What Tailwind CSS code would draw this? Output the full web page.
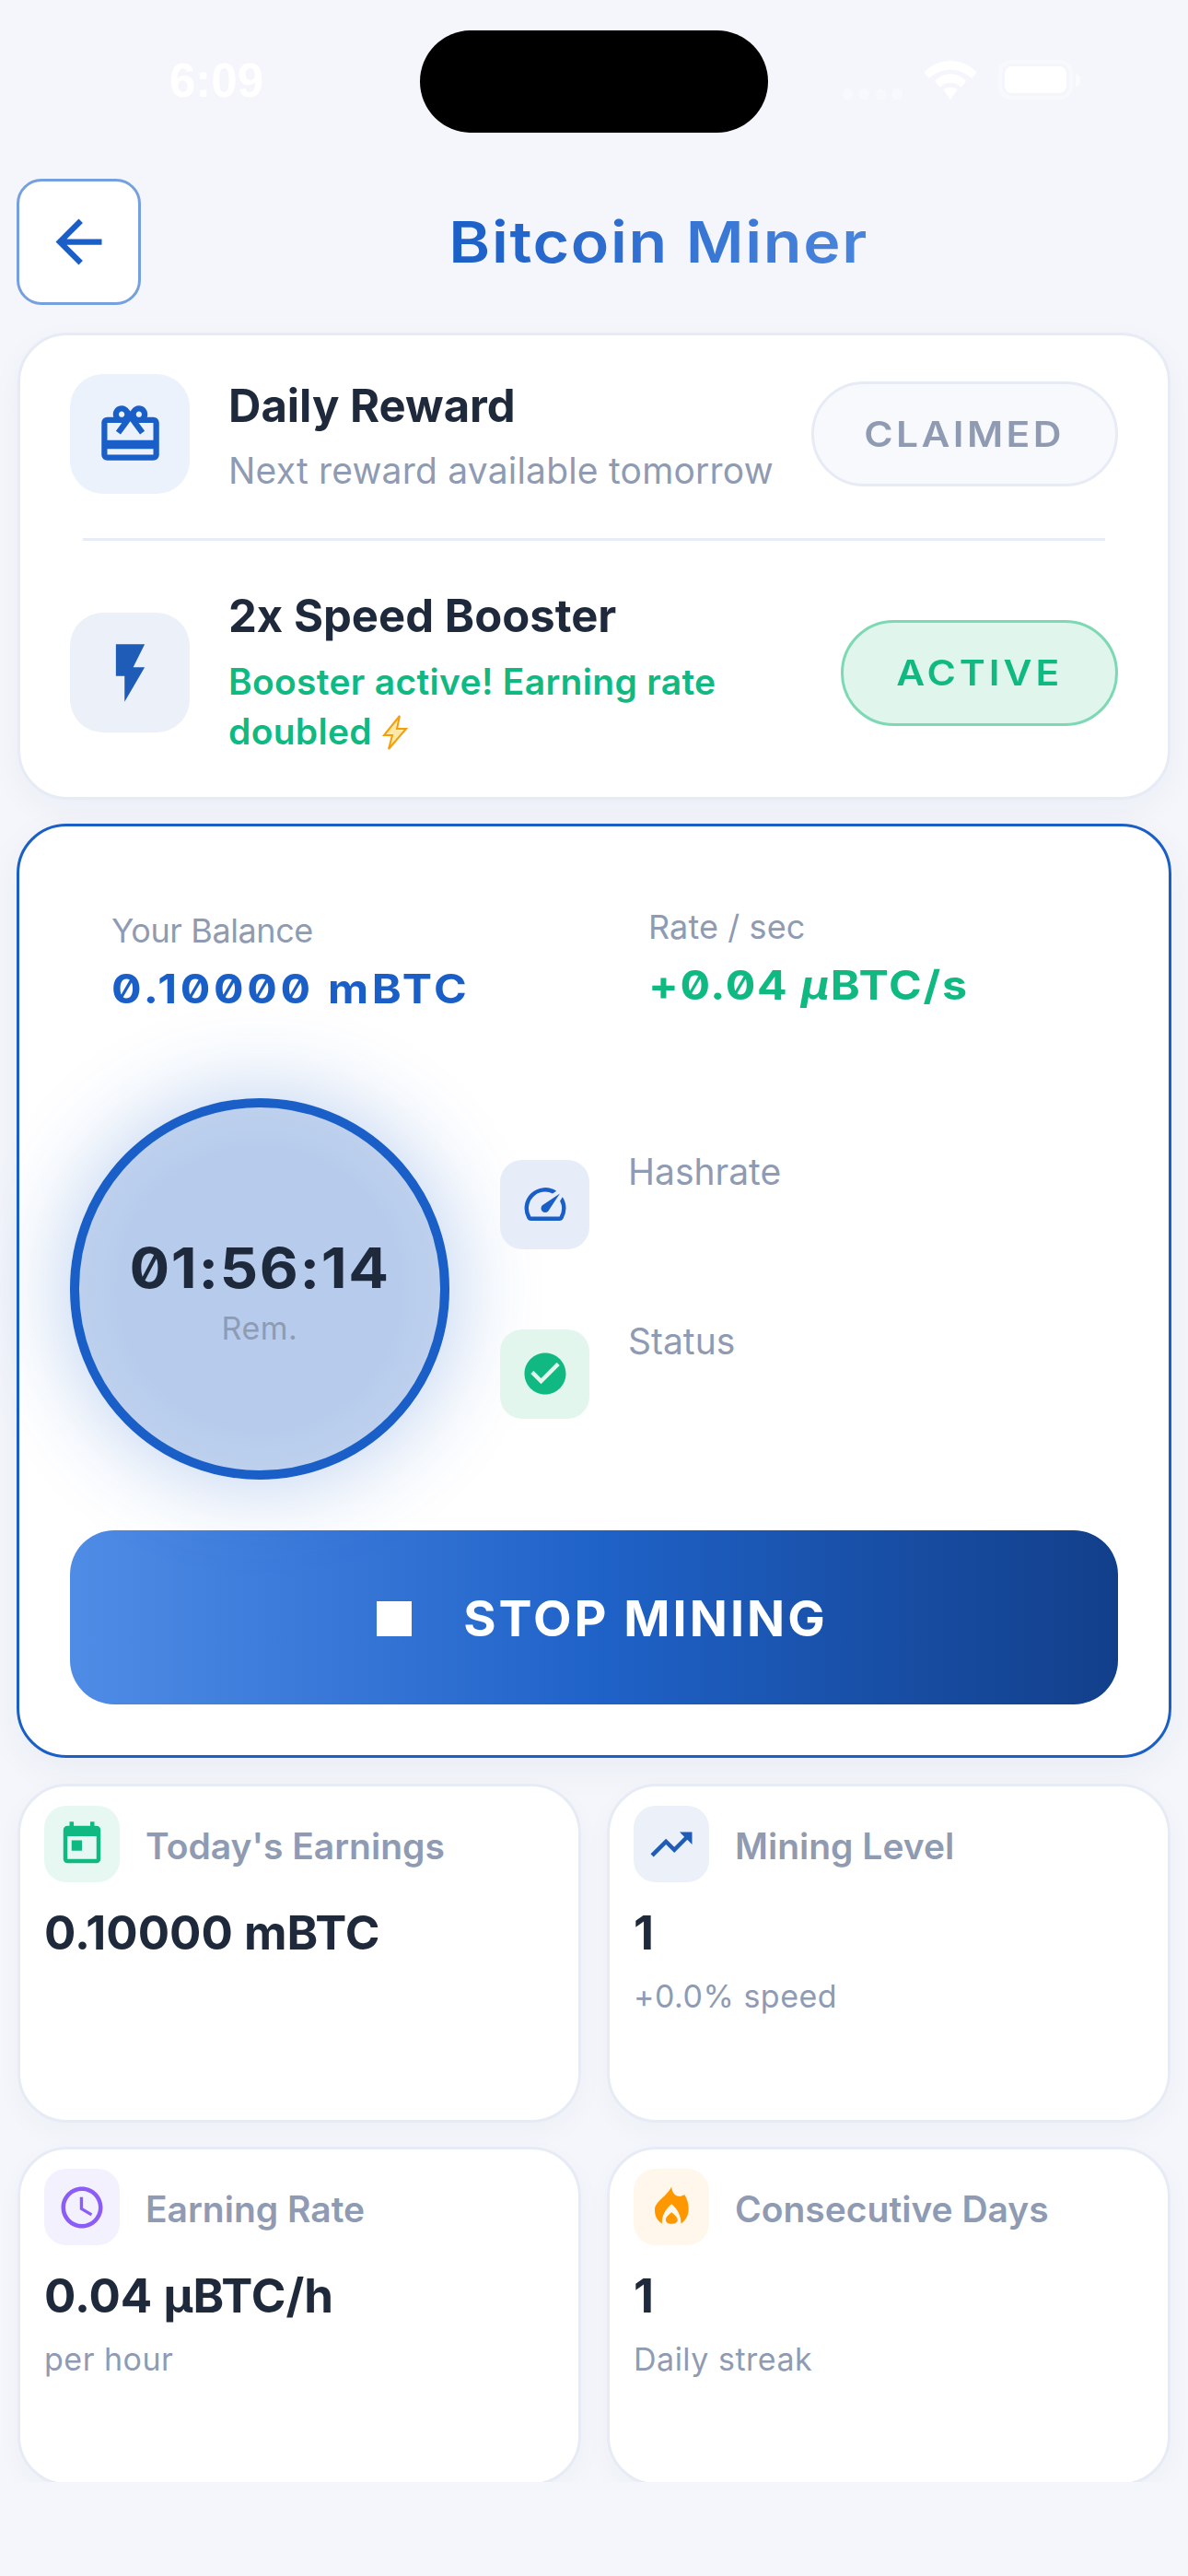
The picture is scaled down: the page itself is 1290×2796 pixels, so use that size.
<!DOCTYPE html>
<html lang="en">
<head>
    <meta charset="UTF-8">
    <meta name="viewport" content="width=device-width, initial-scale=1.0">
    <title>Bitcoin Miner</title>
    <script src="https://cdn.jsdelivr.net/npm/@tailwindcss/browser@4"></script>
</head>
<body class="w-[1290px] h-[2796px] overflow-hidden bg-[#f4f6fb] relative font-[family-name:Inter,sans-serif]">
    <!-- status bar -->
    <div class="h-[194px] relative">
        <div class="absolute left-[456px] top-[33px] w-[378px] h-[111px] rounded-full bg-black"></div>
        <div class="pl-[184px] pt-[57px] text-[51px] leading-[62px] font-semibold text-white font-[family-name:'Liberation_Sans',sans-serif]">6:09</div>
        <div class="absolute left-[915px] top-[65px] flex items-end gap-[23px] text-white">
            <div class="flex gap-[7px] opacity-35">
                <span class="w-[11px] h-[12px] rounded-full bg-white"></span>
                <span class="w-[11px] h-[12px] rounded-full bg-white"></span>
                <span class="w-[11px] h-[12px] rounded-full bg-white"></span>
                <span class="w-[11px] h-[12px] rounded-full bg-white"></span>
            </div>
            <svg class="w-[58px] h-[42px]" viewBox="0 0 60 44" fill="currentColor"><path d="M30 0C19 0 9 4 0 13l6 7c6-6 15-10 24-10s18 4 24 10l6-7C51 4 41 0 30 0z"/><path d="M30 15c-7 0-13 3-18 8l6 7c3-3 7-5 12-5s9 2 12 5l6-7c-5-5-11-8-18-8z"/><path d="M30 30c-4 0-6 1-8 3l8 11 8-11c-2-2-4-3-8-3z"/></svg>
            <div class="flex items-center gap-[3px]">
                <div class="w-[81px] h-[43px] rounded-[14px] border-[4px] border-white/35 p-[3px]"><div class="w-full h-full rounded-[8px] bg-white"></div></div>
                <div class="w-[5px] h-[14px] rounded-r-full bg-white/50"></div>
            </div>
        </div>
    </div>

    <!-- header -->
    <div class="flex items-center pl-[18px] pr-[13px] h-[137px]">
        <button class="w-[135px] h-[137px] shrink-0 rounded-[27px] bg-white border-[3px] border-[#75a0e0] flex items-center justify-center">
            <svg class="w-[75px] h-[75px] text-[#1a5fc8]" viewBox="0 0 24 24" fill="currentColor"><path d="M20 11H7.83l5.59-5.59L12 4l-8 8 8 8 1.41-1.41L7.83 13H20v-2z"/></svg>
        </button>
        <div class="flex-1 text-center">
            <h1 class="inline-block scale-x-[1.1] text-[62px] leading-[72px] font-semibold tracking-[1.5px] bg-linear-to-r from-[#1a5fc8] to-[#4a85dc] bg-clip-text text-transparent">Bitcoin Miner</h1>
        </div>
    </div>

    <!-- scroll area, clipped where the tab bar would start -->
    <div class="h-[2363px] overflow-hidden pt-[30px] px-[18px]">
        <!-- rewards card -->
        <div class="mx-[1px] bg-white border-[3px] border-[#e6ebf5] rounded-[54px] shadow-[0_12px_36px_rgba(30,50,100,0.04)] px-[54px] pt-[42px] pb-[44px]">
            <div class="flex items-center h-[130px]">
                <div class="w-[130px] h-[130px] shrink-0 rounded-[36px] bg-[#ebf2fb] flex items-center justify-center">
                    <svg class="w-[75px] h-[75px] text-[#1a5fc8]" viewBox="0 0 24 24" fill="currentColor"><path d="M20 6h-2.18c.11-.31.18-.65.18-1 0-1.66-1.34-3-3-3-1.05 0-1.96.54-2.5 1.35l-.5.67-.5-.68C10.96 2.54 10.05 2 9 2 7.34 2 6 3.34 6 5c0 .35.07.69.18 1H4c-1.11 0-1.99.89-1.99 2L2 19c0 1.11.89 2 2 2h16c1.11 0 2-.89 2-2V8c0-1.11-.89-2-2-2zm-5-2c.55 0 1 .45 1 1s-.45 1-1 1-1-.45-1-1 .45-1 1-1zM9 4c.55 0 1 .45 1 1s-.45 1-1 1-1-.45-1-1 .45-1 1-1zm11 15H4v-2h16v2zm0-5H4V8h5.08L7 10.83 8.62 12 11 8.76l1-1.36 1 1.36L15.38 12 17 10.83 14.92 8H20v6z"/></svg>
                </div>
                <div class="flex-1 ml-[42px] pt-[6px]">
                    <div class="text-[49px] leading-[60px] font-bold text-[#1e293b]">Daily Reward</div>
                    <div class="mt-[13px] text-[39px] leading-[54px] tracking-[0.2px] text-[#8f9bb3]">Next reward available tomorrow</div>
                </div>
                <div class="w-[333px] h-[114px] shrink-0 rounded-full bg-[#f8f9fc] border-[3px] border-[#e6ebf5] flex items-center justify-center text-[#8f9bb3]">
                    <span class="inline-block scale-x-[1.12] text-[38px] font-semibold tracking-[3px]">CLAIMED</span>
                </div>
            </div>
            <div class="mx-[14px] mt-[48px] mb-[52px] h-[3px] bg-[#e8ecf6]"></div>
            <div class="flex items-center">
                <div class="w-[130px] h-[130px] shrink-0 rounded-[36px] bg-[#ebf0f9] flex items-center justify-center">
                    <svg class="w-[75px] h-[75px] text-[#1e5cb8]" viewBox="0 0 24 24" fill="currentColor"><path d="M7 2v11h3v9l7-12h-4l4-8z"/></svg>
                </div>
                <div class="flex-1 ml-[42px] pr-[130px]">
                    <div class="text-[49px] leading-[60px] font-bold text-[#1e293b]">2x Speed Booster</div>
                    <div class="mt-[14px] text-[39px] leading-[54px] font-semibold tracking-[0.3px] text-[#10b981]">Booster active! Earning rate doubled <svg class="inline-block w-[30px] h-[38px] align-[-6px]" viewBox="0 0 30 38"><path d="M20 1 3 22h9L8 37l19-22h-10z" fill="#ffe9a8" stroke="#f59e0b" stroke-width="2"/></svg></div>
                </div>
                <div class="w-[301px] h-[115px] shrink-0 rounded-full bg-[#e0f5ec] border-[3px] border-[#7dd9b4] flex items-center justify-center text-[#10b981]">
                    <span class="inline-block scale-x-[1.12] text-[38px] font-semibold tracking-[3.5px]">ACTIVE</span>
                </div>
            </div>
        </div>

        <!-- mining card -->
        <div class="mt-[26px] bg-white border-[3px] border-[#1a5fc8] rounded-[54px] shadow-[0_12px_40px_rgba(30,50,100,0.05)] px-[55px] pb-[55px]">
            <div class="flex pl-[45px]">
                <div class="w-[583px] pt-[89px]">
                    <div class="text-[36px] leading-[48px] tracking-[-0.4px] text-[#8f9bb3]">Your Balance</div>
                    <div class="mt-[9px] origin-left scale-x-[1.1] text-[44px] leading-[60px] font-bold tracking-[3.3px] slashed-zero text-[#1a5fc8]">0.10000 mBTC</div>
                </div>
                <div class="pt-[85px]">
                    <div class="text-[36px] leading-[48px] tracking-[0.1px] text-[#8f9bb3]">Rate / sec</div>
                    <div class="mt-[9px] origin-left scale-x-[1.1] text-[44px] leading-[60px] font-bold tracking-[1.5px] slashed-zero text-[#10b981]">+0.04 <i>μ</i>BTC/s</div>
                </div>
            </div>
            <div class="mt-[89px] flex items-center">
                <div class="w-[412px] h-[414px] shrink-0 rounded-full border-[10px] border-[#1a5fc8] bg-[radial-gradient(circle,#b7ccec_55%,#c8d9f1_100%)] shadow-[0_0_100px_rgba(26,95,200,0.32)] flex flex-col items-center justify-center pt-[8px]">
                    <div class="scale-x-[1.08] text-[60px] leading-[70px] font-bold tracking-[1.5px] slashed-zero text-[#1e293b]">01:56:14</div>
                    <div class="mt-[7px] text-[34px] leading-[48px] tracking-[0.5px] text-[#8f9bb3]">Rem.</div>
                </div>
                <div class="ml-[55px] flex flex-col gap-[87px]">
                    <div class="flex items-start">
                        <div class="w-[97px] h-[97px] rounded-[24px] bg-[#e6edf8] flex items-center justify-center">
                            <svg class="w-[54px] h-[54px] text-[#1a5fc8]" viewBox="0 0 24 24" fill="currentColor"><path d="M20.38 8.57l-1.23 1.85a8 8 0 0 1-.22 7.58H5.07A8 8 0 0 1 15.58 6.85l1.85-1.23A10 10 0 0 0 3.35 19a2 2 0 0 0 1.72 1h13.85a2 2 0 0 0 1.74-1 10 10 0 0 0-.27-10.44zm-9.79 6.84a2 2 0 0 0 2.83 0l5.66-8.49-8.49 5.66a2 2 0 0 0 0 2.83z"/></svg>
                        </div>
                        <div class="ml-[42px] -mt-[11px] text-[39px] leading-[48px] text-[#8f9bb3]">Hashrate</div>
                    </div>
                    <div class="flex items-start">
                        <div class="w-[97px] h-[97px] rounded-[24px] bg-[#e3f6ee] flex items-center justify-center">
                            <svg class="w-[54px] h-[54px] text-[#10b981]" viewBox="0 0 24 24" fill="currentColor"><path d="M12 2C6.48 2 2 6.48 2 12s4.48 10 10 10 10-4.48 10-10S17.52 2 12 2zm-2 15l-5-5 1.41-1.41L10 14.17l7.59-7.59L19 8l-9 9z"/></svg>
                        </div>
                        <div class="ml-[42px] -mt-[11px] text-[39px] leading-[48px] text-[#8f9bb3]">Status</div>
                    </div>
                </div>
            </div>
            <button class="mt-[55px] w-full h-[189px] rounded-[48px] bg-linear-to-r from-[#4f8ce6] via-[#1f62c8] to-[#123f8a] flex items-center justify-center gap-[56px] pl-[18px] pt-[2px] text-white">
                <span class="w-[38px] h-[38px] bg-white"></span>
                <span class="text-[54px] font-bold tracking-[3px]">STOP MINING</span>
            </button>
        </div>

        <!-- stats -->
        <div class="mt-[28px] mx-[1px] grid grid-cols-2 gap-x-[28px] gap-y-[26px]">
            <div class="h-[368px] bg-white border-[3px] border-[#e6ebf5] rounded-[54px] shadow-[0_10px_30px_rgba(30,50,100,0.03)] px-[26px] pt-[21px]">
                <div class="flex items-center gap-[28px]">
                    <div class="w-[82px] h-[83px] rounded-[24px] bg-[#e7f8f2] flex items-center justify-center">
                        <svg class="w-[54px] h-[54px] text-[#10b981]" viewBox="0 0 24 24" fill="currentColor"><path d="M19 3h-1V1h-2v2H8V1H6v2H5c-1.11 0-1.99.9-1.99 2L3 19c0 1.1.89 2 2 2h14c1.1 0 2-.9 2-2V5c0-1.1-.9-2-2-2zm0 16H5V8h14v11zM7 10h5v5H7z"/></svg>
                    </div>
                    <div class="pt-[5px] text-[39px] font-semibold text-[#8f9bb3]">Today's Earnings</div>
                </div>
                <div class="mt-[25px] text-[51px] leading-[60px] font-bold text-[#1e293b]">0.10000 mBTC</div>
            </div>
            <div class="h-[368px] bg-white border-[3px] border-[#e6ebf5] rounded-[54px] shadow-[0_10px_30px_rgba(30,50,100,0.03)] px-[26px] pt-[21px]">
                <div class="flex items-center gap-[28px]">
                    <div class="w-[82px] h-[83px] rounded-[24px] bg-[#ebf0f9] flex items-center justify-center">
                        <svg class="w-[54px] h-[54px] text-[#1e5cb8]" viewBox="0 0 24 24" fill="currentColor"><path d="M16 6l2.29 2.29-4.88 4.88-4-4L2 16.59 3.41 18l6-6 4 4 6.3-6.29L22 12V6z"/></svg>
                    </div>
                    <div class="pt-[5px] text-[39px] font-semibold text-[#8f9bb3]">Mining Level</div>
                </div>
                <div class="mt-[25px] text-[51px] leading-[60px] font-bold text-[#1e293b]">1</div>
                <div class="mt-[15px] text-[34px] leading-[48px] tracking-[0.5px] text-[#8f9bb3]">+0.0% speed</div>
            </div>
            <div class="h-[368px] bg-white border-[3px] border-[#e6ebf5] rounded-[54px] shadow-[0_10px_30px_rgba(30,50,100,0.03)] px-[26px] pt-[21px]">
                <div class="flex items-center gap-[28px]">
                    <div class="w-[82px] h-[83px] rounded-[24px] bg-[#f4f1fe] flex items-center justify-center">
                        <svg class="w-[54px] h-[54px] text-[#8b5cf6]" viewBox="0 0 24 24" fill="currentColor"><path d="M11.99 2C6.47 2 2 6.48 2 12s4.47 10 9.99 10C17.52 22 22 17.52 22 12S17.52 2 11.99 2zM12 20c-4.42 0-8-3.58-8-8s3.58-8 8-8 8 3.58 8 8-3.58 8-8 8z"/><path d="M12.5 7H11v6l5.25 3.15.75-1.23-4.5-2.67z"/></svg>
                    </div>
                    <div class="pt-[5px] text-[39px] font-semibold text-[#8f9bb3]">Earning Rate</div>
                </div>
                <div class="mt-[25px] text-[51px] leading-[60px] font-bold text-[#1e293b]">0.04 μBTC/h</div>
                <div class="mt-[15px] text-[34px] leading-[48px] tracking-[0.5px] text-[#8f9bb3]">per hour</div>
            </div>
            <div class="h-[368px] bg-white border-[3px] border-[#e6ebf5] rounded-[54px] shadow-[0_10px_30px_rgba(30,50,100,0.03)] px-[26px] pt-[21px]">
                <div class="flex items-center gap-[28px]">
                    <div class="w-[82px] h-[83px] rounded-[24px] bg-[#fff6ec] flex items-center justify-center">
                        <svg class="w-[54px] h-[54px] text-[#ff9800]" viewBox="0 0 24 24" fill="currentColor"><path d="M12.1 2C12.3 4.5 13.4 6.3 15.6 6.6C16.6 6.7 17.5 6.4 18.3 5.8C19.6 7.8 20.4 10.4 20.3 13C20.2 16 18.8 18.4 16.6 19.8C16.9 16 14.8 12.5 12.1 10.3C9.4 12.5 7.2 16 7.5 19.8C5.2 18.4 3.9 16 4 13C4.2 9 9.5 7 12.1 2Z"/><path d="M12.1 14.3C13.5 15.6 15 16.6 15 18C15 19.2 13.7 19.9 12.1 19.9C10.5 19.9 9.3 19.2 9.3 18C9.3 16.6 10.7 15.6 12.1 14.3Z"/></svg>
                    </div>
                    <div class="pt-[5px] text-[39px] font-semibold text-[#8f9bb3]">Consecutive Days</div>
                </div>
                <div class="mt-[25px] text-[51px] leading-[60px] font-bold text-[#1e293b]">1</div>
                <div class="mt-[15px] text-[34px] leading-[48px] tracking-[0.5px] text-[#8f9bb3]">Daily streak</div>
            </div>
        </div>
    </div>
</body>
</html>
